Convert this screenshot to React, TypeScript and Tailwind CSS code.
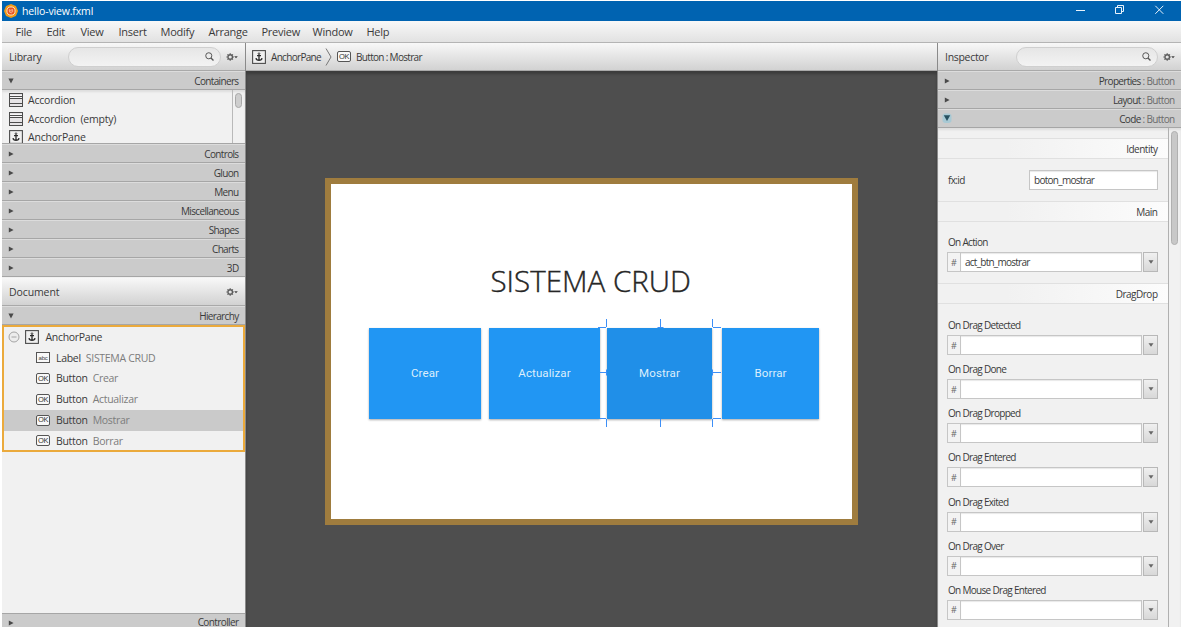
import { ReactNode } from "react";

function Anchor({ cls = "" }: { cls?: string }) {
  return (
    <svg className={`size-[14px] shrink-0 ${cls}`} viewBox="0 0 14 14" fill="none">
      <rect x="0.6" y="0.6" width="12.8" height="12.8" fill="#f0f0f0" stroke="#4c4c4c" strokeWidth="1.1" />
      <circle cx="7" cy="3.6" r="0.8" stroke="#333" strokeWidth="0.9" />
      <path d="M7 4.5V10.2M5 5.7H9M4 8.2C4.2 9.7 5.5 10.3 7 10.3C8.5 10.3 9.8 9.7 10 8.2" stroke="#2c2c2c" strokeWidth="1.3" />
    </svg>
  );
}

function OkIcon() {
  return (
    <span className="flex h-[11px] w-[14px] shrink-0 items-center justify-center rounded-[2px] border border-[#555] bg-[#f8f8f8] font-['Liberation_Sans'] text-[7.5px] leading-none tracking-[-0.3px] text-[#333]">
      OK
    </span>
  );
}

function AbcIcon() {
  return (
    <span className="flex h-[11px] w-[14px] shrink-0 items-center justify-center border border-[#555] bg-[#f8f8f8] font-['Liberation_Sans'] text-[6px] leading-none text-[#444]">
      abc
    </span>
  );
}

function AccordionIcon() {
  return (
    <svg className="size-[14px] shrink-0" viewBox="0 0 14 14" shapeRendering="crispEdges">
      <rect x="0.5" y="0.5" width="13" height="13" fill="#e6e4e6" stroke="#4c4c4c" />
      <path d="M1 3.5H13M1 5.5H13M1 10.5H13" stroke="#4c4c4c" />
      <path d="M1 2H13M1 4.5H13" stroke="#fff" strokeOpacity="0.7" />
    </svg>
  );
}

function Gear() {
  return (
    <svg className="h-[10px] w-[12px] shrink-0" viewBox="0 0 12 10" fill="none">
      <circle cx="4.2" cy="5" r="2.3" stroke="#5a5a5a" strokeWidth="1.4" />
      <path d="M4.2 1.2V2M4.2 8V8.8M0.4 5H1.2M7.2 5H8M1.5 2.3L2.1 2.9M6.3 7.1L6.9 7.7M6.9 2.3L6.3 2.9M2.1 7.1L1.5 7.7" stroke="#5a5a5a" strokeWidth="1.2" />
      <path d="M8.2 4.2H11.8L10 6.3Z" fill="#444" />
    </svg>
  );
}

function Search({ cls }: { cls: string }) {
  return (
    <div className={`flex h-[20px] items-center justify-end rounded-full border border-[#cfcfcf] bg-linear-to-b from-[#e6e6e6] to-[#f3f3f3] pr-[6px] ${cls}`}>
      <svg className="size-[9px]" viewBox="0 0 10 10" fill="none" stroke="#555">
        <circle cx="4.2" cy="4.2" r="3.4" strokeWidth="1.1" />
        <path d="M6.6 6.6L9.4 9.4" strokeWidth="1.5" />
      </svg>
    </div>
  );
}

function Arrow({ open = false, focus = false }: { open?: boolean; focus?: boolean }) {
  if (focus)
    return (
      <svg className="size-[12px] shrink-0 -ml-[3px]" viewBox="0 0 12 12">
        <rect x="1.5" y="0.5" width="9" height="9.5" rx="3" fill="#8cc8dc" fillOpacity="0.55" />
        <path d="M2.8 2.3H9.2L6 8Z" fill="#27505f" />
      </svg>
    );
  return (
    <svg className="size-[6px] shrink-0" viewBox="0 0 6 6" fill="#4a4a4a">
      {open ? <path d="M0.4 0.6H5.6L3 5.4Z" /> : <path d="M0.8 0.4L5.6 3L0.8 5.6Z" />}
    </svg>
  );
}

function Section({ title, suffix, open, focus }: { title: string; suffix?: string; open?: boolean; focus?: boolean }) {
  return (
    <div className="flex h-[19px] shrink-0 items-center justify-between border-t border-b border-t-[#dcdcdc] border-b-[#a6a6a6] bg-[#cbcbcb] pr-[6.5px] pl-[6px] text-[10px] tracking-[-0.65px]">
      <Arrow open={open} focus={focus} />
      <span className="whitespace-pre">
        {title}
        {suffix && <span className="text-[#6c6c6c]"> : {suffix}</span>}
      </span>
    </div>
  );
}

const bar = "flex shrink-0 items-center border-b border-[#a9a9a9] bg-linear-to-b from-[#f8f8f8] to-[#d2d2d2]";

function TreeRow({ icon, type, name, selected }: { icon: ReactNode; type: string; name: string; selected?: boolean }) {
  return (
    <div className={`flex h-[20.8px] items-center pl-[32px] text-[10.5px] tracking-[-0.3px] ${selected ? "bg-[#cacaca]" : ""}`}>
      {icon}
      <span className="ml-[6px]">{type}</span>
      <span className="ml-[5px] text-[#7c7c7c]">{name}</span>
    </div>
  );
}

function Band({ title }: { title: string }) {
  return (
    <div className="flex h-[21px] items-center justify-end border-y border-[#e0e0e0] bg-linear-to-r from-[#f1f1f1] from-30% to-[#fcfcfc] pr-[10.5px] text-[10px] tracking-[-0.5px]">
      {title}
    </div>
  );
}

function Handler({ label, value = "" }: { label: string; value?: string }) {
  return (
    <div className="h-[44.17px] pl-[9px]">
      <div className="flex h-[20px] items-center pl-px text-[10px] tracking-[-0.69px]">{label}</div>
      <div className="flex h-[20px] w-[211px]">
        <div className="flex w-[13px] items-center justify-center border border-r-0 border-[#c6c6c6] bg-[#f3f3f3] text-[9px] text-[#666]">#</div>
        <div className="flex w-[182px] items-center border border-[#c6c6c6] bg-white pl-[4px] text-[10px] tracking-[-0.75px] shadow-[inset_0_1px_1px_#e8e8e8]">{value}</div>
        <div className="ml-px flex w-[15px] items-center justify-center border border-[#b8b8b8] bg-linear-to-b from-[#f0f0f0] to-[#d8d8d8]">
          <svg className="h-[4px] w-[6px]" viewBox="0 0 6 4">
            <path d="M0.5 0.3H5.5L3 3.8Z" fill="#666" />
          </svg>
        </div>
      </div>
    </div>
  );
}

const menus: [string, string][] = [
  ["File", "w-[31px]"],
  ["Edit", "w-[34px]"],
  ["View", "w-[38px]"],
  ["Insert", "w-[42px]"],
  ["Modify", "w-[48px]"],
  ["Arrange", "w-[53px]"],
  ["Preview", "w-[51px]"],
  ["Window", "w-[54px]"],
  ["Help", "w-[40px]"],
];

const tile = "flex h-[91px] items-center justify-center font-['Roboto'] text-[11.5px] tracking-[0.1px] text-[#dceefc] shadow-[0_1px_2px_rgba(0,0,0,0.35)]";

export default function App() {
  return (
    <div className="flex h-[627px] w-[1181px] flex-col overflow-hidden bg-white pt-px pl-[2px] font-['Open_Sans','Noto_Sans',sans-serif] leading-none text-[#3a3a3a]">
      <header className="flex h-[20px] shrink-0 items-center bg-[#0063b1] pl-[2px] text-white">
        <svg className="size-[14px]" viewBox="0 0 14 14">
          <path d="M7 0L9.4 1L11.9 2.1L13 4.6L14 7L13 9.4L11.9 11.9L9.4 13L7 14L4.6 13L2.1 11.9L1 9.4L0 7L1 4.6L2.1 2.1L4.6 1Z" fill="#f39a16" />
          <circle cx="7" cy="7" r="4.1" fill="#e9501d" stroke="#fbe0c0" strokeWidth="1" />
          <path d="M5.2 5.6L6.6 6.2L8.6 5.5L8.8 7.6L7.5 8.8L5.6 8.2Z" fill="#f07a48" stroke="#fbd9c5" strokeWidth="0.6" />
        </svg>
        <span className="ml-[4px] text-[10.5px] tracking-[-0.15px]">hello-view.fxml</span>
        <svg className="ml-auto h-[20px] w-[112px]" viewBox="0 0 112 20" fill="none" stroke="#e8f2fb">
          <path d="M7 9.5H16" />
          <path d="M46.5 6.5H52.5V12.5H46.5ZM48.5 6V4.5H54.5V10.5H53M86.3 4.8L94.3 12.8M94.3 4.8L86.3 12.8" />
        </svg>
      </header>

      <nav className="flex h-[22px] shrink-0 items-center border-b border-[#b4b4b4] bg-linear-to-b from-[#f8f8f8] to-[#e2e2e2] pl-[13.5px] text-[11px] tracking-[-0.25px]">
        {menus.map(([m, w]) => (
          <span key={m} className={w}>{m}</span>
        ))}
      </nav>

      <div className="flex min-h-0 flex-1">
        <aside className="flex w-[243px] shrink-0 flex-col bg-[#f1f1f1]">
          <div className={`${bar} h-[28px] pl-[7px] text-[10.5px] tracking-[-0.25px]`}>
            <span className="w-[59px] pt-px">Library</span>
            <Search cls="w-[153px]" />
            <span className="ml-[5px]"><Gear /></span>
          </div>
          <Section title="Containers" open />
          <div className="flex h-[54px] shrink-0 overflow-hidden border-b border-[#a6a6a6] shadow-[inset_0_2px_2px_#dedede]">
            <div className="w-[230px] pt-px pl-[7px] text-[10.5px] tracking-[-0.2px]">
              <div className="flex h-[18.5px] items-center gap-[5px]"><AccordionIcon />Accordion</div>
              <div className="flex h-[18.5px] items-center gap-[5px] whitespace-pre"><AccordionIcon />Accordion  (empty)</div>
              <div className="flex h-[18.5px] items-center gap-[5px]"><Anchor />AnchorPane</div>
            </div>
            <div className="flex-1 border-l border-[#b9b9b9] pt-[3px] pl-[2px]">
              <div className="h-[15px] w-[7px] rounded-full border border-[#a8a8a8] bg-[#cecece]" />
            </div>
          </div>
          <Section title="Controls" />
          <Section title="Gluon" />
          <Section title="Menu" />
          <Section title="Miscellaneous" />
          <Section title="Shapes" />
          <Section title="Charts" />
          <Section title="3D" />
          <div className={`${bar} mt-px h-[28px] justify-between pt-px pr-[7px] pl-[7px] text-[10.5px] tracking-[-0.1px]`}>
            <span className="pt-px">Document</span>
            <Gear />
          </div>
          <Section title="Hierarchy" open />
          <div className="h-[127px] shrink-0 border-2 border-[#ebaa3c]">
            <div className="flex h-[20.4px] items-center pl-[4px] text-[10.5px] tracking-[-0.3px]">
              <svg className="size-[12px]" viewBox="0 0 12 12" fill="#ececec" stroke="#a4a4a4">
                <circle cx="6" cy="6" r="5" />
                <path d="M3.5 6H8.5" />
              </svg>
              <Anchor cls="ml-[5px]" />
              <span className="ml-[6.5px]">AnchorPane</span>
            </div>
            <TreeRow icon={<AbcIcon />} type="Label" name="SISTEMA CRUD" />
            <TreeRow icon={<OkIcon />} type="Button" name="Crear" />
            <TreeRow icon={<OkIcon />} type="Button" name="Actualizar" />
            <TreeRow icon={<OkIcon />} type="Button" name="Mostrar" selected />
            <TreeRow icon={<OkIcon />} type="Button" name="Borrar" />
          </div>
          <div className="mt-auto flex h-[14px] shrink-0 items-start justify-between border-t border-[#a6a6a6] bg-[#cbcbcb] pr-[6.5px] pl-[6px] text-[10px] tracking-[-0.6px]">
            <span className="pt-[6px]"><Arrow /></span>
            <span className="pt-[3px]">Controller</span>
          </div>
        </aside>

        <main className="flex min-w-0 flex-1 flex-col border-l border-[#8a8a8a]">
          <div className={`${bar} h-[28px] pl-[6px] text-[10px] tracking-[-0.68px]`}>
            <Anchor />
            <span className="ml-[5px] pt-px">AnchorPane</span>
            <svg className="ml-[4px] h-[18px] w-[7px]" viewBox="0 0 7 18" fill="none" stroke="#777">
              <path d="M1 0.5L6 9L1 17.5" />
            </svg>
            <span className="ml-[5px]"><OkIcon /></span>
            <span className="ml-[5px] pt-px">Button : Mostrar</span>
          </div>
          <div className="flex-1 bg-[#4e4e4e] pt-[107px] pl-[79px] shadow-[inset_0_3px_3px_#3c3c3c]">
            <div className="h-[347px] w-[533px] border-[6px] border-[#9f7c3e] bg-white pt-[79px]">
              <h1 className="flex h-[36px] items-center pl-[159.5px] text-[29.5px] font-light tracking-[0.02px] whitespace-nowrap text-[#262626] [-webkit-text-stroke:0.4px_#262626]">SISTEMA CRUD</h1>
              <div className="relative mt-[29px] flex pl-[38px]">
                <div className={`${tile} w-[112px] bg-[#2196f3]`}>Crear</div>
                <div className={`${tile} ml-[8px] w-[111px] bg-[#2196f3]`}>Actualizar</div>
                <div className={`${tile} ml-[7px] w-[105px] bg-[#208fe8]`}>Mostrar</div>
                <div className={`${tile} ml-[10px] w-[97px] bg-[#2196f3]`}>Borrar</div>
                <svg className="absolute -top-[9px] left-[267px] h-[108px] w-[126px]" viewBox="0 0 126 108" fill="none" stroke="#3d8ff7">
                  <path d="M8.5 0V8M62.5 0V8M114.5 0V8M8.5 100V108M62.5 100V108M114.5 100V108M0 8.5H8M115 8.5H123M2 53.5H8M115 53.5H123M2 99.5H8M115 99.5H123M59.5 8.5H65.5M8.5 50.5V56.5M114.5 50.5V56.5" />
                </svg>
              </div>
            </div>
          </div>
        </main>

        <aside className="flex w-[244px] shrink-0 flex-col border-l border-[#8a8a8a] bg-[#f1f1f1]">
          <div className={`${bar} h-[28px] pl-[7px] text-[10.5px]`}>
            <span className="w-[71px] pt-px tracking-[-0.3px]">Inspector</span>
            <Search cls="w-[142px]" />
            <span className="ml-[5px]"><Gear /></span>
          </div>
          <Section title="Properties" suffix="Button" />
          <Section title="Layout" suffix="Button" />
          <Section title="Code" suffix="Button" open focus />
          <div className="flex min-h-0 flex-1 overflow-hidden shadow-[inset_0_2px_2px_#dedede]">
            <div className="w-[230px] shrink-0 pt-[10px]">
              <Band title="Identity" />
              <div className="flex h-[42px] items-center pl-[10px] text-[10px]">
                <span className="w-[81px] tracking-[-0.65px]">fx:id</span>
                <span className="flex h-[20px] w-[129px] items-center border border-[#c6c6c6] bg-white pl-[4px] tracking-[-0.72px] shadow-[inset_0_1px_1px_#e8e8e8]">boton_mostrar</span>
              </div>
              <Band title="Main" />
              <div className="h-[61px] pt-[10px]"><Handler label="On Action" value="act_btn_mostrar" /></div>
              <Band title="DragDrop" />
              <div className="pt-[11px]">
                <Handler label="On Drag Detected" />
                <Handler label="On Drag Done" />
                <Handler label="On Drag Dropped" />
                <Handler label="On Drag Entered" />
                <Handler label="On Drag Exited" />
                <Handler label="On Drag Over" />
                <Handler label="On Mouse Drag Entered" />
              </div>
            </div>
            <div className="flex-1 border-l border-[#b0b0b0] pt-[3px] pl-[2px]">
              <div className="h-[114px] w-[7px] rounded-full border border-[#b0b0b0] bg-[#c8c8c8]" />
            </div>
          </div>
        </aside>
      </div>
    </div>
  );
}
